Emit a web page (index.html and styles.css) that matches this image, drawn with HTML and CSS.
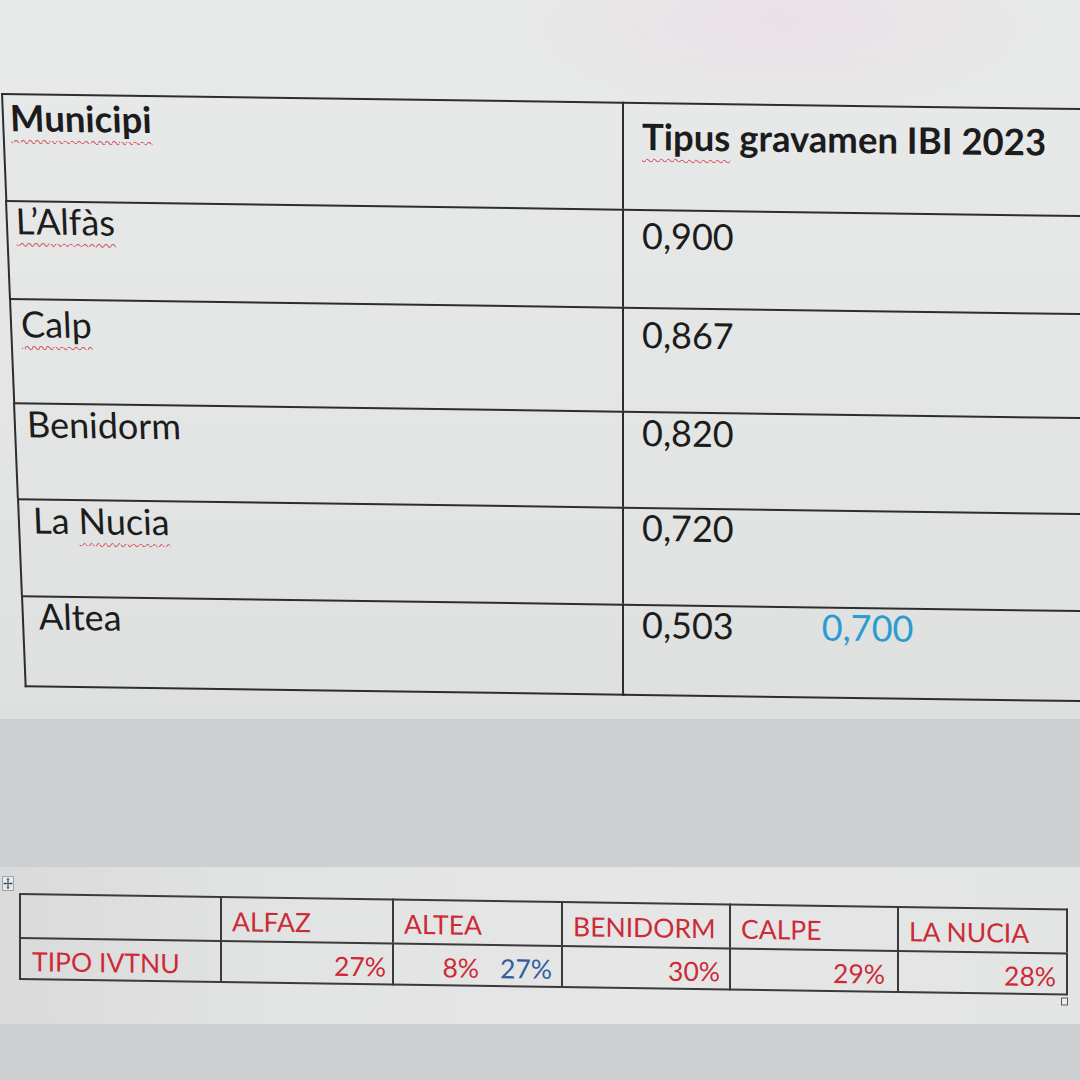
FILE: index.html
```html
<!DOCTYPE html>
<html lang="ca">
<head>
<meta charset="utf-8">
<title>Tipus IBI i IVTNU</title>
<link rel="stylesheet" href="styles.css">
</head>
<body>
<main class="page">
  <section class="shot shot-top">
    <div class="ibi">
      <div class="ibi-row">
        <div class="ibi-cell muni head"><span class="spell">Municipi</span></div>
        <div class="ibi-cell rate head"><span class="spell">Tipus</span> gravamen IBI 2023</div>
      </div>
      <div class="ibi-row">
        <div class="ibi-cell muni"><span class="spell">L’Alfàs</span></div>
        <div class="ibi-cell rate">0,900</div>
      </div>
      <div class="ibi-row">
        <div class="ibi-cell muni"><span class="spell">Calp</span></div>
        <div class="ibi-cell rate">0,867</div>
      </div>
      <div class="ibi-row">
        <div class="ibi-cell muni">Benidorm</div>
        <div class="ibi-cell rate">0,820</div>
      </div>
      <div class="ibi-row">
        <div class="ibi-cell muni">La <span class="spell">Nucia</span></div>
        <div class="ibi-cell rate">0,720</div>
      </div>
      <div class="ibi-row">
        <div class="ibi-cell muni">Altea</div>
        <div class="ibi-cell rate">0,503<span class="alt">0,700</span></div>
      </div>
    </div>
  </section>

  <div class="band band-mid"></div>

  <section class="shot shot-bottom">
    <svg class="move-handle" viewBox="0 0 12 15" width="12" height="15" aria-hidden="true">
      <rect x="0.5" y="0.5" width="11" height="14" fill="#e8e9ea" stroke="#9aa3ad" stroke-width="1"/>
      <path d="M6 2.5 V12.5 M2 7.5 H10" stroke="#3d4d63" stroke-width="1.2" fill="none"/>
      <path d="M6 1.8 L4.6 3.8 H7.4 Z M6 13.2 L4.6 11.2 H7.4 Z M1.3 7.5 L3.3 6.1 V8.9 Z M10.7 7.5 L8.7 6.1 V8.9 Z" fill="#3d4d63"/>
    </svg>
    <div class="ivtnu">
      <div class="iv-row iv-head">
        <div class="iv-cell"></div>
        <div class="iv-cell">ALFAZ</div>
        <div class="iv-cell">ALTEA</div>
        <div class="iv-cell">BENIDORM</div>
        <div class="iv-cell">CALPE</div>
        <div class="iv-cell">LA NUCIA</div>
      </div>
      <div class="iv-row iv-data">
        <div class="iv-cell">TIPO IVTNU</div>
        <div class="iv-cell num">27%</div>
        <div class="iv-cell num">8%<span class="iv-blue">27%</span></div>
        <div class="iv-cell num">30%</div>
        <div class="iv-cell num">29%</div>
        <div class="iv-cell num">28%</div>
      </div>
      <div class="resize-handle"></div>
    </div>
  </section>

  <div class="band band-low"></div>
</main>
</body>
</html>
```

FILE: styles.css
```css
* { box-sizing: border-box; }

html, body {
  margin: 0;
  padding: 0;
}

body {
  width: 1080px;
  height: 1080px;
  overflow: hidden;
  background: #cdd0d0;
  font-family: Lato, "Open Sans", "DejaVu Sans", sans-serif;
  color: #1c1c1c;
}

.page {
  display: flex;
  flex-direction: column;
  width: 1080px;
  height: 1080px;
}

/* ---------- top photo: IBI table ---------- */
.shot-top {
  flex: 0 0 719px;
  padding: 93px 0 0 1px;
  overflow: hidden;
  background:
    radial-gradient(ellipse 260px 90px at 780px 20px, rgba(234, 218, 228, 0.55), rgba(234, 218, 228, 0) 100%),
    linear-gradient(180deg, #e8e9e9 0%, #e4e5e5 55%, #dedfdf 100%);
}

.ibi {
  width: 1120px;
  transform: skewY(0.8deg);
  transform-origin: 0 0;
}

.ibi-row {
  display: grid;
  grid-template-columns: 621px 1fr;
  height: 98px;
}
.ibi-row:nth-child(1) { height: 107px; }
.ibi-row:nth-child(2) { height: 98px; }
.ibi-row:nth-child(3) { height: 104px; }
.ibi-row:nth-child(4) { height: 96px; }
.ibi-row:nth-child(5) { height: 97px; }
.ibi-row:nth-child(6) { height: 92px; }

.ibi-cell {
  border-top: 2px solid #2d2d2d;
  border-left: 2px solid #2d2d2d;
  font-size: 36px;
  line-height: 36px;
  white-space: nowrap;
}
.ibi-row:last-child .ibi-cell { border-bottom: 2px solid #2d2d2d; }

.head { font-weight: 700; font-size: 36.5px; }

.muni {
  transform: skewX(2.3deg);
  transform-origin: 0 0;
}
.ibi-row:nth-child(1) .muni { margin-left: 0;    padding: 4px 0 0 6px; }
.ibi-row:nth-child(2) .muni { margin-left: 4px;  padding: 0 0 0 8px; }
.ibi-row:nth-child(3) .muni { margin-left: 8px;  padding: 5px 0 0 9px; }
.ibi-row:nth-child(4) .muni { margin-left: 12px; padding: 1px 0 0 11px; }
.ibi-row:nth-child(5) .muni { margin-left: 16px; padding: 1px 0 0 13px; }
.ibi-row:nth-child(6) .muni { margin-left: 20px; padding: 0 0 0 15px; }

.rate { padding-left: 18px; }
.ibi-row:nth-child(1) .rate { padding-top: 14px; }
.ibi-row:nth-child(2) .rate { padding-top: 6px; }
.ibi-row:nth-child(3) .rate { padding-top: 7px; }
.ibi-row:nth-child(4) .rate { padding-top: 1px; }
.ibi-row:nth-child(5) .rate { padding-top: 0; }
.ibi-row:nth-child(6) .rate { padding-top: 0; }

.alt {
  margin-left: 88px;
  color: #2b9bd0;
}

.spell {
  text-decoration: underline wavy #d4606b;
  text-decoration-thickness: 1px;
  text-underline-offset: 8px;
  text-decoration-skip-ink: none;
}

/* ---------- grey bands ---------- */
.band-mid { flex: 0 0 148px; background: #cdd0d0; }
.band-low { flex: 1 1 auto; background: #cbcfcf; }

/* ---------- bottom photo: IVTNU table ---------- */
.shot-bottom {
  flex: 0 0 157px;
  padding: 9px 0 0 2px;
  overflow: hidden;
  background: linear-gradient(90deg, #d9dad9 0%, #e2e3e3 25%, #e6e6e7 60%, #e3e4e4 100%);
}

.move-handle { display: block; }

.ivtnu {
  width: 1049px;
  margin: 2px 0 0 17px;
  transform: skewY(0.85deg);
  transform-origin: 0 0;
}

.iv-row {
  display: grid;
  grid-template-columns: 201px 172px 169px 168px 168px 171px;
}
.iv-head { height: 44px; }
.iv-data { height: 43px; }

.iv-cell {
  border-top: 2px solid #3a3a3a;
  border-left: 2px solid #3a3a3a;
  padding: 8px 9px 0 10px;
  font-size: 26.5px;
  line-height: 30px;
  color: #cc2b36;
  white-space: nowrap;
}
.iv-cell:first-child { padding-left: 11px; }
.iv-cell:last-child { border-right: 2px solid #3a3a3a; }
.iv-data .iv-cell { border-bottom: 2px solid #3a3a3a; padding-top: 7px; }

.num { text-align: right; }
.iv-data .iv-cell:nth-child(2) { padding-right: 6px; }
.iv-data .iv-cell:nth-child(5) { padding-right: 12px; }
.iv-data .iv-cell:nth-child(6) { padding-right: 10px; }

.iv-blue {
  margin-left: 21px;
  color: #2f5f9e;
}

.resize-handle {
  width: 7px;
  height: 8px;
  margin: 2px 0 0 auto;
  border: 1px solid #5a5a5a;
  background: #eceded;
}
```
